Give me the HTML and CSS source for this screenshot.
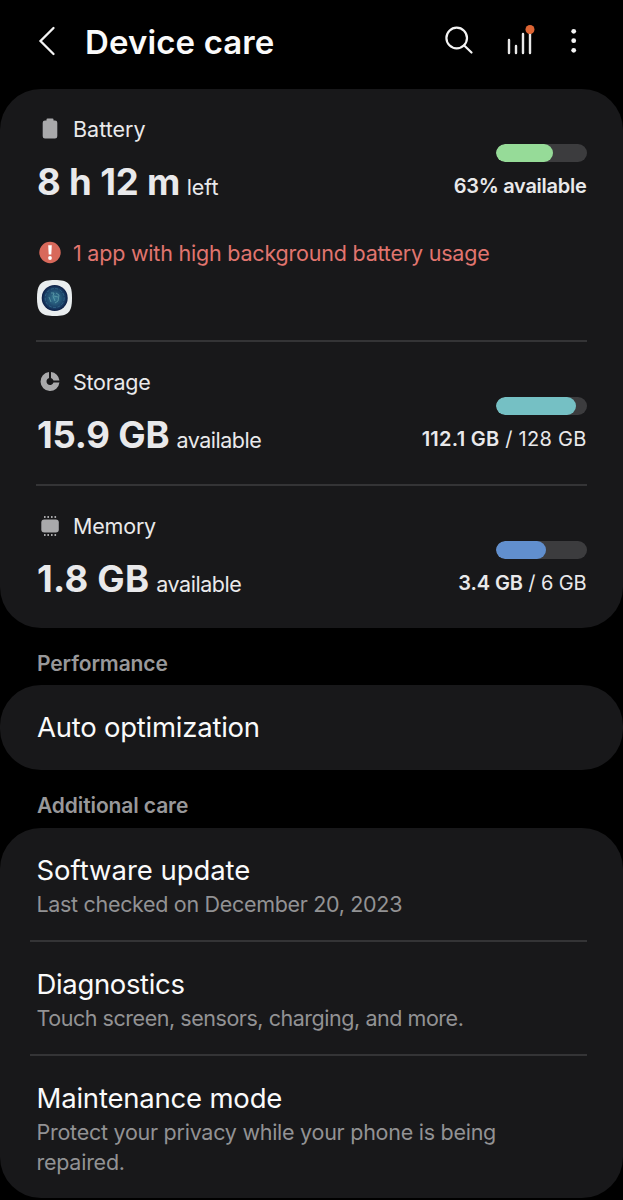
FILE: index.html
```
<!DOCTYPE html>
<html lang="en">
<head>
<meta charset="utf-8">
<title>Device care</title>
<link rel="stylesheet" href="styles.css">
</head>
<body>
<header class="topbar">
  <svg class="back" width="20" height="32" viewBox="0 0 20 32"><path d="M16.500 3L3.500 16L16.500 29"/></svg>
  <h1 class="title"><span class="t">Device care</span></h1>
  <svg class="actions" width="144" height="40" viewBox="0 0 144 40">
    <g class="line"><circle cx="16.700" cy="18" r="10.300"/><path d="M24.200 25.500L31.500 32.500"/></g>
    <g class="bars"><path d="M69 20V33M76 26V33M83 14V33M90 13V33"/></g>
    <circle class="dot" cx="90" cy="9.500" r="4.500"/>
    <g class="dots"><circle cx="133.700" cy="11.300" r="2.400"/><circle cx="133.700" cy="20.700" r="2.400"/><circle cx="133.700" cy="30.300" r="2.400"/></g>
  </svg>
</header>
<main>
  <section class="card">
    <div class="stat battery">
      <div class="stat-row">
        <div class="info">
          <div class="label"><svg class="icon" width="26" height="26" viewBox="0 0 26 26"><path d="M9.500 3.500q0-1 1-1h5q1 0 1 1v1h1.500q2.300 0 2.300 2.300v13.500q0 2.300-2.300 2.300h-10q-2.300 0-2.300-2.300v-13.500q0-2.300 2.300-2.300h1.500z"/></svg><span class="t l1">Battery</span></div>
          <div class="value"><b class="t v1">8 h 12 m</b><span class="t u1">left</span></div>
        </div>
        <div class="usage">
          <div class="meter"><div class="fill green" style="width:63.500%"></div></div>
          <div class="amount"><b class="t a1">63% available</b></div>
        </div>
      </div>
      <div class="alert"><svg class="alert-icon" width="26" height="26" viewBox="0 0 26 26"><circle class="alert-bg" cx="13" cy="12.500" r="10.700"/><path d="M11.200 5.300h3.600l-.5 9.200h-2.600z"/><circle cx="13" cy="18" r="1.900"/></svg><span class="t al">1 app with high background battery usage</span></div>
      <svg class="app" width="36" height="36" viewBox="0 0 36 36">
        <defs><radialGradient id="globe"><stop offset="0" stop-color="#367994"/><stop offset=".5" stop-color="#245577"/><stop offset=".8" stop-color="#183a62"/><stop offset="1" stop-color="#0b1d45"/></radialGradient></defs>
        <path class="tile" d="M17.700 0C31.500 0 35 4 35 18S31.500 36 17.700 36S0 32 0 18S4 0 17.700 0z"/>
        <circle cx="17.700" cy="18" r="13" fill="url(#globe)"/>
        <circle class="ring" cx="17.700" cy="18" r="9.500"/>
        <path class="spark" d="M14 13h3l-1 3 2 5M19 13l3 2-1 6-3 2M12 17l2 5M17 16l4 1"/>
      </svg>
    </div>
    <div class="stat">
      <div class="stat-row">
        <div class="info">
          <div class="label"><svg class="icon" width="26" height="26" viewBox="0 0 26 26"><path d="M12 3.050A9.500 9.500 0 1 0 22.450 13.500H16.500A3.600 3.600 0 1 1 12 9z"/><path d="M14 3.050A9.500 9.500 0 0 1 22.450 11.500H16.500A4 4 0 0 0 14 9z"/></svg><span class="t l2">Storage</span></div>
          <div class="value"><b class="t v2">15.9 GB</b><span class="t u2">available</span></div>
        </div>
        <div class="usage">
          <div class="meter"><div class="fill teal" style="width:88%"></div></div>
          <div class="amount"><span class="t a2"><b>112.1 GB</b> / 128 GB</span></div>
        </div>
      </div>
    </div>
    <div class="stat">
      <div class="stat-row">
        <div class="info">
          <div class="label"><svg class="icon" width="26" height="26" viewBox="0 0 26 26"><rect x="4.300" y="6.500" width="17.500" height="13" rx="3"/><path class="pins" d="M7.800 3v2M11.200 3v2M14.800 3v2M18.300 3v2M7.800 21v2M11.200 21v2M14.800 21v2M18.300 21v2"/></svg><span class="t l3">Memory</span></div>
          <div class="value"><b class="t v3">1.8 GB</b><span class="t u3">available</span></div>
        </div>
        <div class="usage">
          <div class="meter"><div class="fill blue" style="width:56%"></div></div>
          <div class="amount"><span class="t a3"><b>3.4 GB</b> / 6 GB</span></div>
        </div>
      </div>
    </div>
  </section>
  <h2 class="group"><span class="t g1">Performance</span></h2>
  <section class="card single"><div class="name"><span class="t n1">Auto optimization</span></div></section>
  <h2 class="group second"><span class="t g2">Additional care</span></h2>
  <section class="card list">
    <div class="item"><div class="name"><span class="t n2">Software update</span></div><p class="desc"><span class="t d1">Last checked on December 20, 2023</span></p></div>
    <div class="item"><div class="name"><span class="t n3">Diagnostics</span></div><p class="desc"><span class="t d2">Touch screen, sensors, charging, and more.</span></p></div>
    <div class="item"><div class="name"><span class="t n4">Maintenance mode</span></div><p class="desc"><span class="t d3">Protect your privacy while your phone is being<br>repaired.</span></p></div>
  </section>
</main>
</body>
</html>
```
FILE: styles.css
```
* { box-sizing: border-box; }
body { margin: 0; background: #000; color: #e9e9eb; font-family: Inter, Roboto, sans-serif; font-size: 21.5px; }
h1, h2, p { margin: 0; }
.t { white-space: nowrap; }
.topbar { height: 89px; padding: 0 37px; display: flex; align-items: flex-start; }
.back { margin-top: 25px; fill: none; stroke: #f4f4f4; stroke-width: 2.3; stroke-linecap: round; }
.title { flex: 1; margin: 20px 0 0 28px; font-size: 33px; line-height: 44px; font-weight: 600; letter-spacing: .12px; color: #fafafa; }
.actions { margin: 20px 2px 0 0; fill: #f4f4f4; }
.line { fill: none; stroke: #f4f4f4; stroke-width: 2.2; stroke-linecap: round; }
.bars { stroke: #e8e8e8; stroke-width: 2.4; stroke-linecap: round; }
.dot { fill: #dd6534; }
.card { background: #18181a; border-radius: 41px; }
.stat { height: 144px; margin: 0 36px; padding: 25px 0 0 1px; border-bottom: 2px solid #343436; }
.stat:last-child { height: 142px; border: 0; }
.battery { height: 253px; }
.stat-row { display: flex; justify-content: space-between; }
.label { display: flex; align-items: center; height: 30px; gap: 10px; }
.icon { fill: #a9a9ab; }
.pins { stroke: #a9a9ab; stroke-width: 1.6; }
.value { display: flex; align-items: baseline; gap: 7px; height: 48px; margin-top: 14px; line-height: 48px; }
.value b { font-size: 36.5px; font-weight: 700; }
.usage { display: flex; flex-direction: column; align-items: flex-end; padding-top: 29.5px; padding-right: .5px; }
.meter { width: 91px; height: 18.5px; border-radius: 10px; background: #3c3c3e; overflow: hidden; }
.fill { height: 100%; border-radius: 10px; }
.green { background: #96db98; }
.teal { background: #75c0c4; }
.blue { background: #618fce; }
.amount { margin-top: 11px; line-height: 26px; font-size: 20px; }
.amount b { font-weight: 600; }
.alert { display: flex; align-items: center; gap: 10px; height: 30px; margin-top: 32px; color: #e1756f; }
.alert-icon { fill: #fff; }
.alert-bg { fill: #d8695b; }
.app { display: block; margin-top: 12px; }
.tile { fill: #e9edef; }
.ring { fill: none; stroke: #3b7897; stroke-width: 1; stroke-dasharray: 3 1.500; opacity: .6; }
.spark { fill: none; stroke: #65a6b1; stroke-width: 1; opacity: .7; }
.group { height: 57px; padding: 21px 37px 0; font-size: 21px; line-height: 30px; font-weight: 600; color: #98989a; }
.second { height: 58px; }
.single { height: 85px; padding: 25px 37px; }
.name { font-size: 27.5px; line-height: 34px; color: #fafafa; }
.list { height: 370px; }
.item { margin: 0 36px 0 30px; padding: 24.5px 0 20.5px 6.5px; border-bottom: 2px solid #343436; }
.item:last-child { border: 0; }
.desc { margin-top: 3.5px; line-height: 29.5px; color: #929294; }

/* Optical tracking per string */
.v1 { letter-spacing: -.15px; }
.u1 { letter-spacing: -.1px; margin-left: -.5px; }
.a1 { letter-spacing: -.27px; }
.al { letter-spacing: -.21px; }
.l2 { letter-spacing: -.27px; }
.l3 { letter-spacing: -.2px; }
.v2 { letter-spacing: -.2px; }
.v3 { letter-spacing: .25px; }
.u2, .u3 { letter-spacing: -.48px; }
.a2 { letter-spacing: .26px; }
.a3 { letter-spacing: -.12px; }
.g1, .g2 { letter-spacing: -.11px; }
.n1 { letter-spacing: -.24px; }
.n2 { letter-spacing: -.05px; }
.n3 { letter-spacing: -.35px; }
.n4 { letter-spacing: -.2px; }
.d1 { letter-spacing: -.32px; }
.d2 { letter-spacing: -.46px; }
.d3 { letter-spacing: -.26px; }
```
